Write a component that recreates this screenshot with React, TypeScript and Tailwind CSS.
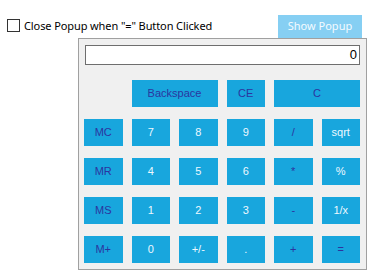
import clsx from "clsx";

type Key = { label: string; span?: number; dark?: boolean; empty?: boolean };

const keys: Key[] = [
  { label: "", empty: true },
  { label: "Backspace", span: 2, dark: true },
  { label: "CE", dark: true },
  { label: "C", span: 2, dark: true },
  { label: "MC", dark: true },
  { label: "7" },
  { label: "8" },
  { label: "9" },
  { label: "/", dark: true },
  { label: "sqrt" },
  { label: "MR", dark: true },
  { label: "4" },
  { label: "5" },
  { label: "6" },
  { label: "*", dark: true },
  { label: "%" },
  { label: "MS", dark: true },
  { label: "1" },
  { label: "2" },
  { label: "3" },
  { label: "-", dark: true },
  { label: "1/x" },
  { label: "M+", dark: true },
  { label: "0" },
  { label: "+/-" },
  { label: "." },
  { label: "+", dark: true },
  { label: "=", dark: true },
];

const App = () => {
  return (
    <div className="w-[373px] h-[278px] bg-white overflow-hidden">
      <div className="flex items-start pt-[15px]">
        <label className="flex items-center mt-[4px] ml-[7px] gap-[4px] text-[11px] leading-[13px] text-black font-['Noto_Sans','Open_Sans',sans-serif]">
          <span className="w-[13px] h-[13px] border border-[#333333] bg-white shrink-0" />
          <span className="tracking-[-0.1px]">Close Popup when "=" Button Clicked</span>
        </label>
        <button className="ml-auto mr-[11px] w-[84px] h-[23px] bg-[#86cff3] text-[#f4fbff] text-[11px] font-['Noto_Sans','Open_Sans',sans-serif]">
          Show Popup
        </button>
      </div>
      <div className="ml-[78px] w-[289px] h-[232px] border border-[#a0a0a0] bg-[#f0f0f0] pt-[6px] pl-[5px] pr-[6px]">
        <div className="ml-[1px] h-[20px] border border-[#6e6e6e] bg-white flex items-center justify-end pr-[2px] text-[13px] text-black font-['Liberation_Sans',Arial,sans-serif]">
          0
        </div>
        <div className="mt-[15px] grid grid-cols-6 gap-x-[9px] gap-y-[12px] font-['Liberation_Sans',Arial,sans-serif] text-[11px]">
          {keys.map((k, i) =>
            k.empty ? (
              <div key={i} />
            ) : (
              <button
                key={i}
                className={clsx(
                  "h-[27px] bg-[#18a6dd] flex items-center justify-center",
                  k.span === 2 && "col-span-2",
                  k.dark ? "text-[#2b35a0]" : "text-[#eef8ff]"
                )}
              >
                {k.label}
              </button>
            )
          )}
        </div>
      </div>
    </div>
  );
};

export default App;
